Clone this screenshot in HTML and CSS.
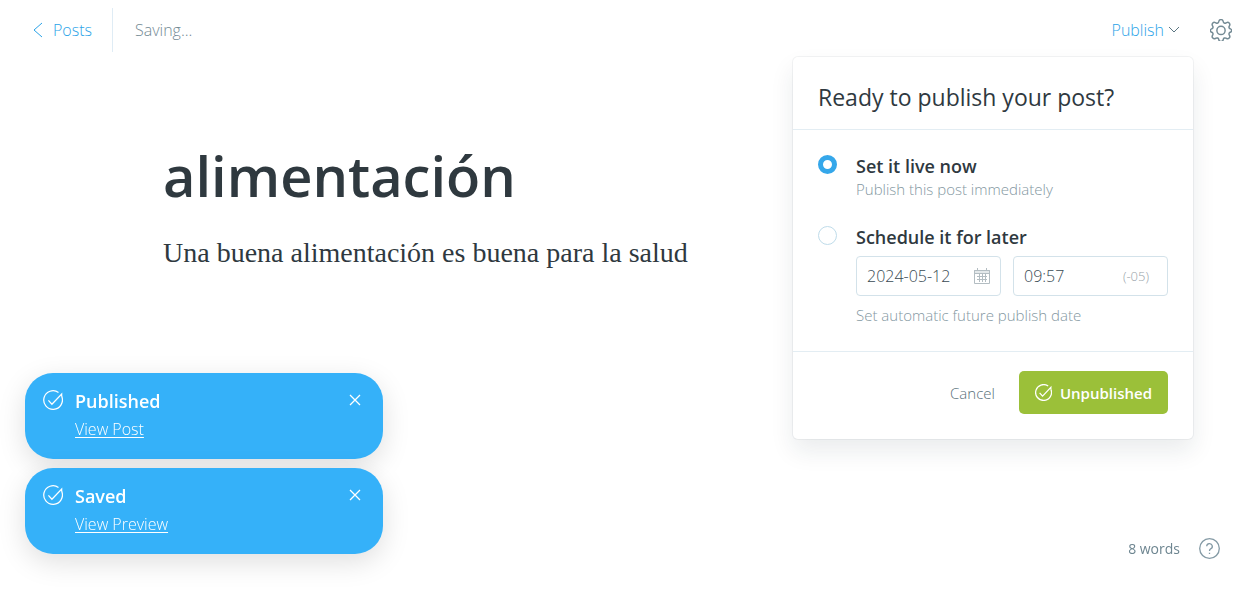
FILE: index.html
```html
<!DOCTYPE html>
<html lang="es">
<head>
<meta charset="utf-8">
<meta name="viewport" content="width=device-width, initial-scale=1">
<title>alimentación</title>
<link rel="stylesheet" href="styles.css">
</head>
<body>
<svg class="sprite" aria-hidden="true">
  <symbol id="check" viewBox="0 0 24 24">
    <path d="M22.4 7.6A11.2 11.2 0 1 1 18.6 2.9"/>
    <path d="M6.5 12.5l4.2 4.6L22.4 4.8v3"/>
  </symbol>
  <symbol id="close" viewBox="0 0 12 12"><path d="M1 1l10 10M11 1L1 11"/></symbol>
</svg>
<header class="topbar">
  <a class="back" href="#posts">
    <svg class="back-arrow" viewBox="0 0 10 16" aria-hidden="true"><path d="M9 1L1 8l8 7"/></svg>
    Posts
  </a>
  <span class="save-state">Saving...</span>
  <div class="publish">
    <button class="publish-trigger" type="button" aria-expanded="true">Publish
      <svg class="chevron" viewBox="0 0 12 8" aria-hidden="true"><path d="M1 1l5 5 5-5"/></svg>
    </button>
    <form class="menu">
      <h2 class="menu-title">Ready to publish your post?</h2>
      <div class="menu-body">
        <div class="option">
          <input class="radio" type="radio" name="when" id="now" checked>
          <div class="option-text">
            <label class="option-label" for="now">Set it live now</label>
            <p class="option-hint">Publish this post immediately</p>
          </div>
        </div>
        <div class="option">
          <input class="radio" type="radio" name="when" id="later">
          <div class="option-text">
            <label class="option-label" for="later">Schedule it for later</label>
            <div class="fields">
              <div class="field">
                <input class="field-input" type="text" aria-label="Publish date" value="2024-05-12">
                <svg class="calendar" viewBox="0 0 16 16" aria-hidden="true"><path class="calendar-head" d="M.5 2.5h15v3H.5z"/><path d="M.5 2.5h15v13H.5zM.5 5.5h15M3 8.5h10M3 11.5h10M5.500 6v8M8.500 6v8M11.500 6v8M3.500 0v3M12.500 0v3"/></svg>
              </div>
              <div class="field field-time">
                <input class="field-input" type="text" aria-label="Publish time" value="09:57">
                <span class="zone">(-05)</span>
              </div>
            </div>
            <p class="option-hint">Set automatic future publish date</p>
          </div>
        </div>
      </div>
      <div class="menu-footer">
        <button class="cancel" type="button">Cancel</button>
        <button class="confirm" type="submit"><svg class="confirm-icon" aria-hidden="true"><use href="#check"/></svg>Unpublished</button>
      </div>
    </form>
  </div>
  <button class="settings" type="button" aria-label="Settings">
    <svg class="gear" viewBox="0 0 24 24" aria-hidden="true"><path d="M9.700 2.300a2.400 2.400 0 0 1 4.600 0l.3 1a1.900 1.900 0 0 0 2.600 1.100l1-.5a2.400 2.400 0 0 1 3.200 3.200l-.5 1a1.900 1.900 0 0 0 1.100 2.600l.3.100a1.900 1.900 0 0 1 0 3.600l-.3.100a1.900 1.900 0 0 0-1.100 2.600l.5 1a2.400 2.400 0 0 1-3.200 3.200l-1-.5a1.900 1.900 0 0 0-2.600 1.100l-.3 1a2.400 2.400 0 0 1-4.600 0l-.3-1a1.900 1.900 0 0 0-2.600-1.100l-1 .5a2.400 2.400 0 0 1-3.200-3.200l.5-1A1.900 1.900 0 0 0 2 14.500l-.3-.1a1.900 1.900 0 0 1 0-3.600l.3-.1a1.900 1.900 0 0 0 1.100-2.600l-.5-1a2.400 2.400 0 0 1 3.200-3.200l1 .5a1.900 1.900 0 0 0 2.600-1.100z"/><circle cx="12" cy="12.500" r="4.500"/></svg>
  </button>
</header>
<main class="editor">
  <h1 class="post-title">alimentación</h1>
  <p class="post-text">Una buena alimentación es buena para la salud</p>
</main>
<aside class="toasts">
  <div class="toast">
    <svg class="toast-icon" aria-hidden="true"><use href="#check"/></svg>
    <div class="toast-content"><strong class="toast-title">Published</strong><a class="toast-link" href="#post">View Post</a></div>
    <button class="toast-close" type="button" aria-label="Close"><svg class="close-icon" aria-hidden="true"><use href="#close"/></svg></button>
  </div>
  <div class="toast">
    <svg class="toast-icon" aria-hidden="true"><use href="#check"/></svg>
    <div class="toast-content"><strong class="toast-title">Saved</strong><a class="toast-link" href="#preview">View Preview</a></div>
    <button class="toast-close" type="button" aria-label="Close"><svg class="close-icon" aria-hidden="true"><use href="#close"/></svg></button>
  </div>
</aside>
<footer class="status">
  <span>8 words</span>
  <a class="help" href="#help" aria-label="Help"><svg class="help-icon" viewBox="0 0 24 24" aria-hidden="true"><circle cx="12" cy="12" r="11.200"/><path d="M8.800 9.500a3.200 3.200 0 1 1 4.500 3c-1 .5-1.300 1-1.300 2.300M12 16.800v1.400"/></svg></a>
</footer>
</body>
</html>
```

FILE: styles.css
```css
* { box-sizing: border-box; }
body {
  margin: 0;
  min-height: 100vh;
  display: flex;
  flex-direction: column;
  background: #fff;
  color: #2f393f;
  font: 300 16px/20px "Open Sans", "Noto Sans", sans-serif;
}
h1, h2, p { margin: 0; }
button { padding: 0; border: 0; background: none; font: inherit; cursor: pointer; }
svg { fill: none; stroke: currentColor; flex: none; }
.sprite { position: absolute; width: 0; height: 0; }

.topbar { display: flex; align-items: center; padding: 8px 18px 8px 33px; }
.back {
  display: flex; align-items: center; gap: 10px;
  height: 44px; padding-right: 20px;
  border-right: 1px solid #dfecf5;
  color: #2ba3e8; text-decoration: none;
}
.back-arrow { width: 10px; height: 16px; }
.save-state { margin-left: 22px; color: #738a94; }
.publish { position: relative; margin-left: auto; }
.publish-trigger { display: flex; align-items: center; gap: 4px; color: #2ba3e8; }
.chevron { width: 12px; height: 8px; color: #5b7682; }
.settings { margin-left: 30px; color: #738a94; }
.gear { display: block; width: 22px; height: 22px; stroke-width: 1.6; }

.menu {
  position: absolute; top: 37px; right: -13px; width: 400px;
  background: #fff; border-radius: 5px;
  box-shadow: 0 0 0 1px rgba(99, 114, 130, .08), 0 12px 24px rgba(27, 39, 51, .09);
}
.menu-title { padding: 28px 25px 20px; border-bottom: 1px solid #e3edf3; font-size: 23px; line-height: 24px; font-weight: 400; }
.menu-body { display: flex; flex-direction: column; gap: 26px; padding: 25px; }
.option { display: flex; gap: 19px; }
.option-text { flex: 1; min-width: 0; }
.radio {
  appearance: none; flex: none; width: 19px; height: 19px; margin: 0;
  border: 1px solid #bfdcea; border-radius: 50%; background: #fff;
}
.radio:checked { border: 5px solid #35a7ea; }
.option-label { display: block; font-size: 18px; line-height: 23px; font-weight: 600; }
.option-hint { color: #8397a1; font-size: 15px; line-height: 22px; }
.fields { display: grid; grid-template-columns: 145fr 155fr; gap: 12px; margin: 7px 0 8px; }
.field { display: flex; align-items: center; min-width: 0; height: 40px; padding: 0 10px; border: 1px solid #d3e2ea; border-radius: 4px; }
.field-time { padding-right: 18px; }
.field-input { flex: 1; min-width: 0; padding: 0; border: 0; outline: 0; background: none; color: #394a53; font: inherit; }
.calendar { width: 16px; height: 16px; color: #b3bdc2; }
.calendar-head { fill: #e3e8ea; }
.zone { color: #97a3a9; font-size: 13px; }
.menu-footer { display: flex; justify-content: flex-end; align-items: center; gap: 24px; padding: 19px 25px 25px; border-top: 1px solid #e3edf3; }
.cancel { color: #587079; font-size: 15px; }
.confirm { display: flex; align-items: center; gap: 8px; height: 43px; padding: 0 16px; border-radius: 5px; background: #9bc039; color: #fff; font-size: 15px; font-weight: 600; }
.confirm-icon { width: 17px; height: 17px; stroke-width: 1.8; }

.editor { padding: 80px 163px; }
.post-title { font-size: 56px; line-height: 70px; font-weight: 600; }
.post-text { margin-top: 23px; font: 400 28px/40px "Liberation Serif", serif; }

.toasts { position: fixed; left: 25px; bottom: 35px; width: 358px; display: flex; flex-direction: column; gap: 9px; }
.toast {
  display: flex; align-items: flex-start; height: 86px; padding: 17px 22px 0 18px;
  border-radius: 28px; background: #35b1f9; color: #fff;
  box-shadow: 0 8px 28px rgba(0, 0, 0, .13);
}
.toast-icon { width: 20px; height: 20px; stroke-width: 1.5; }
.toast-content { flex: 1; display: flex; flex-direction: column; align-items: flex-start; gap: 7px; margin-left: 12px; }
.toast-title { font-size: 18px; line-height: 22px; font-weight: 600; }
.toast-link { color: inherit; text-underline-offset: 2px; }
.toast-close { padding: 4px 0; color: inherit; }
.close-icon { display: block; width: 12px; height: 12px; stroke-width: 1.3; }

.status { position: fixed; right: 30px; bottom: 30px; display: flex; align-items: center; gap: 19px; color: #6d8590; font-size: 14px; font-weight: 400; }
.help { color: #849aa5; }
.help-icon { display: block; width: 21px; height: 21px; stroke-width: 1.5; }
```
